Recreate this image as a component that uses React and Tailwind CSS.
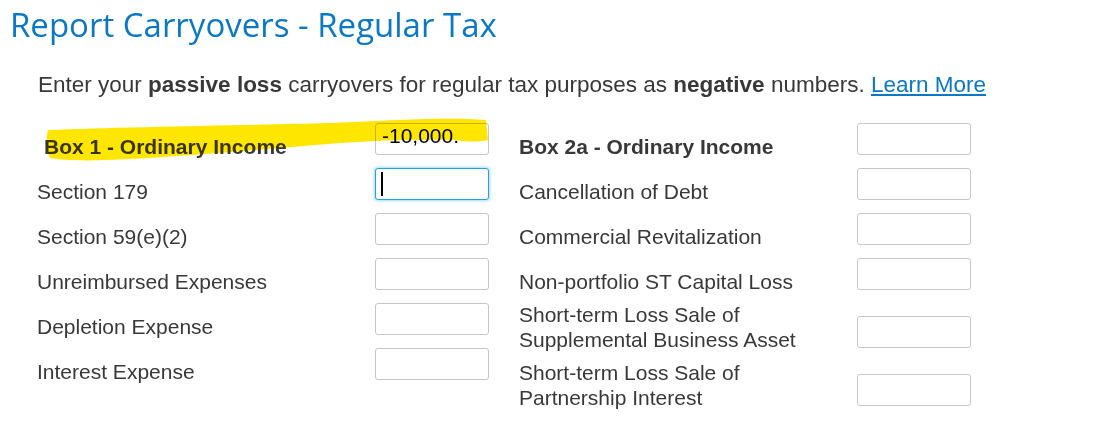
import React from "react";

const arial = { fontFamily: '"Liberation Sans", Arial, sans-serif' };

function Box({ value, focused }) {
  if (focused) {
    return (
      <div className="mb-[4px] flex h-[32px] w-[114px] shrink-0 items-start rounded-[3px] border border-[#22a2e4] bg-white pl-[5px] pt-[3px] shadow-[0_0_3px_1px_rgba(60,170,230,0.45)]">
        <div className="h-[24px] w-[2px] bg-black" />
      </div>
    );
  }
  return (
    <div className="mb-[4px] flex h-[32px] w-[114px] shrink-0 items-start rounded-[3px] border border-[#c6c6c6] bg-white pl-[6px] text-[21px] leading-[24px] text-black">
      {value}
    </div>
  );
}

function Row({ label, bold, value, focused, tall, shift }) {
  return (
    <div className={`flex items-end ${tall ? "h-[58px]" : "h-[45px]"}`}>
      <div
        className={`w-[338px] shrink-0 text-[21px] leading-[25px] text-[#383838] ${bold ? "font-bold" : ""} ${shift ? "pl-[7px]" : ""}`}
      >
        {label}
      </div>
      <Box value={value} focused={focused} />
    </div>
  );
}

export default function App() {
  const left = [
    { label: "Box 1 - Ordinary Income", bold: true, value: "-10,000.", shift: true },
    { label: "Section 179", focused: true },
    { label: "Section 59(e)(2)" },
    { label: "Unreimbursed Expenses" },
    { label: "Depletion Expense" },
    { label: "Interest Expense" },
  ];
  const right = [
    { label: "Box 2a - Ordinary Income", bold: true },
    { label: "Cancellation of Debt" },
    { label: "Commercial Revitalization" },
    { label: "Non-portfolio ST Capital Loss" },
    {
      label: (
        <>
          Short-term Loss Sale of
          <br />
          Supplemental Business Asset
        </>
      ),
      tall: true,
    },
    {
      label: (
        <>
          Short-term Loss Sale of
          <br />
          Partnership Interest
        </>
      ),
      tall: true,
    },
  ];

  return (
    <div className="relative h-[439px] w-[1095px] overflow-hidden bg-white" style={arial}>
      <h1
        className="pl-[10px] pt-[5px] text-[33px] leading-[40px] font-normal text-[#0a78c2]"
        style={{ fontFamily: '"Open Sans", Lato, sans-serif' }}
      >
        Report Carryovers - Regular Tax
      </h1>
      <p className="mt-[27px] pl-[38px] text-[22.5px] leading-[26px] text-[#383838]">
        Enter your <b>passive loss</b> carryovers for regular tax purposes as{" "}
        <b>negative</b> numbers.{" "}
        <a href="#" className="text-[#0a78c2] underline">
          Learn More
        </a>
      </p>
      <div className="mt-[16px] flex pl-[37px]">
        <div className="flex flex-col">
          {left.map((r, i) => (
            <Row key={i} {...r} />
          ))}
        </div>
        <div className="ml-[30px] flex flex-col">
          {right.map((r, i) => (
            <Row key={i} {...r} />
          ))}
        </div>
      </div>
      <svg
        className="pointer-events-none absolute left-0 top-0 mix-blend-multiply"
        width="1095"
        height="439"
        viewBox="0 0 1095 439"
      >
        <path
          d="M48,130 C 120,127 250,125 330,123 C 400,120 450,117 486,120 L 488,140 C 478,142 468,142 455,140 C 420,139 380,140 340,143 C 290,147 200,155 130,159 C 95,161 65,161 50,158 C 46,150 46,138 48,130 Z"
          fill="#ffe600"
        />
      </svg>
    </div>
  );
}
